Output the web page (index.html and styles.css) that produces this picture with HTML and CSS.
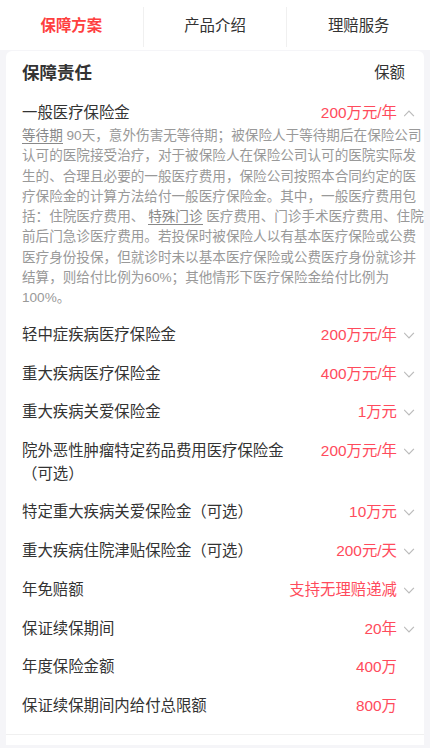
FILE: index.html
```html
<!DOCTYPE html>
<html lang="zh-CN">
  <head>
    <meta charset="UTF-8" />
    <meta name="viewport" content="width=device-width, initial-scale=1.0" />
    <title>保障方案</title>
    <link rel="stylesheet" href="styles.css">
  </head>
  <body>
    <div class="tabs">
      <div class="tab active">保障方案</div>
      <div class="tab">产品介绍</div>
      <div class="tab">理赔服务</div>
    </div>

    <div class="card">
      <div class="card-head">
        <h3>保障责任</h3>
        <span>保额</span>
      </div>

      <ul class="duty-list">
        <li class="duty open">
          <div class="duty-row">
            <span class="name">一般医疗保险金</span>
            <span class="amount">200万元/年</span>
            <svg class="arrow" width="11" height="7" viewBox="0 0 11 7"><path d="M0.6 6.2 L5.5 1.2 L10.4 6.2" fill="none" stroke="#bbb" stroke-width="1.2"/></svg>
          </div>
          <p class="desc"><span class="term">等待期</span> 90天，意外伤害无等待期；被保险人于等待期后在保险公司<br>认可的医院接受治疗，对于被保险人在保险公司认可的医院实际发<br>生的、合理且必要的一般医疗费用，保险公司按照本合同约定的医<br>疗保险金的计算方法给付一般医疗保险金。其中，一般医疗费用包<br>括：住院医疗费用、 <span class="term">特殊门诊</span> 医疗费用、门诊手术医疗费用、住院<br>前后门急诊医疗费用。若投保时被保险人以有基本医疗保险或公费<br>医疗身份投保，但就诊时未以基本医疗保险或公费医疗身份就诊并<br>结算，则给付比例为60%；其他情形下医疗保险金给付比例为<br>100%。</p>
        </li>
        <li class="duty">
          <div class="duty-row">
            <span class="name">轻中症疾病医疗保险金</span>
            <span class="amount">200万元/年</span>
            <svg class="arrow" width="11" height="7" viewBox="0 0 11 7"><path d="M0.6 0.8 L5.5 5.8 L10.4 0.8" fill="none" stroke="#bbb" stroke-width="1.2"/></svg>
          </div>
        </li>
        <li class="duty">
          <div class="duty-row">
            <span class="name">重大疾病医疗保险金</span>
            <span class="amount">400万元/年</span>
            <svg class="arrow" width="11" height="7" viewBox="0 0 11 7"><path d="M0.6 0.8 L5.5 5.8 L10.4 0.8" fill="none" stroke="#bbb" stroke-width="1.2"/></svg>
          </div>
        </li>
        <li class="duty">
          <div class="duty-row">
            <span class="name">重大疾病关爱保险金</span>
            <span class="amount">1万元</span>
            <svg class="arrow" width="11" height="7" viewBox="0 0 11 7"><path d="M0.6 0.8 L5.5 5.8 L10.4 0.8" fill="none" stroke="#bbb" stroke-width="1.2"/></svg>
          </div>
        </li>
        <li class="duty">
          <div class="duty-row">
            <span class="name">院外恶性肿瘤特定药品费用医疗保险金（可选）</span>
            <span class="amount">200万元/年</span>
            <svg class="arrow" width="11" height="7" viewBox="0 0 11 7"><path d="M0.6 0.8 L5.5 5.8 L10.4 0.8" fill="none" stroke="#bbb" stroke-width="1.2"/></svg>
          </div>
        </li>
        <li class="duty">
          <div class="duty-row">
            <span class="name">特定重大疾病关爱保险金（可选）</span>
            <span class="amount">10万元</span>
            <svg class="arrow" width="11" height="7" viewBox="0 0 11 7"><path d="M0.6 0.8 L5.5 5.8 L10.4 0.8" fill="none" stroke="#bbb" stroke-width="1.2"/></svg>
          </div>
        </li>
        <li class="duty">
          <div class="duty-row">
            <span class="name">重大疾病住院津贴保险金（可选）</span>
            <span class="amount">200元/天</span>
            <svg class="arrow" width="11" height="7" viewBox="0 0 11 7"><path d="M0.6 0.8 L5.5 5.8 L10.4 0.8" fill="none" stroke="#bbb" stroke-width="1.2"/></svg>
          </div>
        </li>
        <li class="duty">
          <div class="duty-row">
            <span class="name">年免赔额</span>
            <span class="amount">支持无理赔递减</span>
            <svg class="arrow" width="11" height="7" viewBox="0 0 11 7"><path d="M0.6 0.8 L5.5 5.8 L10.4 0.8" fill="none" stroke="#bbb" stroke-width="1.2"/></svg>
          </div>
        </li>
        <li class="duty">
          <div class="duty-row">
            <span class="name">保证续保期间</span>
            <span class="amount">20年</span>
            <svg class="arrow" width="11" height="7" viewBox="0 0 11 7"><path d="M0.6 0.8 L5.5 5.8 L10.4 0.8" fill="none" stroke="#bbb" stroke-width="1.2"/></svg>
          </div>
        </li>
        <li class="duty">
          <div class="duty-row">
            <span class="name">年度保险金额</span>
            <span class="amount">400万</span>
            <span class="arrow"></span>
          </div>
        </li>
        <li class="duty">
          <div class="duty-row">
            <span class="name">保证续保期间内给付总限额</span>
            <span class="amount">800万</span>
            <span class="arrow"></span>
          </div>
        </li>
      </ul>

      <div class="card-foot"></div>
    </div>
  </body>
</html>
```

FILE: styles.css
```css
body {
  font-family: "Liberation Sans", "Noto Sans CJK SC", sans-serif;
  margin: 0;
  padding: 0;
  background-color: #f5f5f8;
  color: #333;
}
.tabs {
  display: flex;
  height: 50px;
  background: white;
}
.tab {
  flex: 1;
  display: flex;
  align-items: center;
  justify-content: center;
  height: 40px;
  margin-top: 7px;
  padding-bottom: 6px;
  box-sizing: border-box;
  font-size: 15.4px;
  color: #333;
  border-right: 1.5px solid #f0f0f0;
}
.tab:last-child {
  border-right: none;
}
.tab.active {
  color: #fe3f3f;
  font-weight: bold;
}
.card {
  margin: 1px 6px 0;
  background: white;
  border-radius: 6px 6px 0 0;
}
.card-head {
  display: flex;
  justify-content: space-between;
  align-items: center;
  padding: 10px 19px 9px 16px;
  line-height: 24px;
}
.card-head h3 {
  margin: 0;
  font-size: 17.5px;
  font-weight: bold;
  color: #333;
}
.card-head span {
  font-size: 15.4px;
  color: #333;
}
.duty-list {
  list-style: none;
  margin: 0;
  padding: 0 8px 8px 16px;
}
.duty-row {
  display: flex;
  align-items: flex-start;
  padding: 8px 0;
  font-size: 15.4px;
  line-height: 22.7px;
}
.duty.open .duty-row {
  padding-bottom: 1.5px;
}
.name {
  flex: 1;
  padding-right: 12px;
  color: #333;
}
.amount {
  color: #ff4b5c;
  white-space: nowrap;
  margin-right: 5px;
}
.arrow {
  display: block;
  width: 14px;
  flex-shrink: 0;
  margin-top: 8px;
  box-sizing: border-box;
  padding: 0 1.5px;
}
.desc {
  margin: 0;
  padding-bottom: 7.5px;
  font-size: 13.6px;
  line-height: 20.25px;
  color: #999;
  white-space: nowrap;
}
.term {
  border-bottom: 1px solid #888;
  color: #888;
}
.card-foot {
  height: 10px;
  border-top: 1px solid #f0f0f0;
}
```
